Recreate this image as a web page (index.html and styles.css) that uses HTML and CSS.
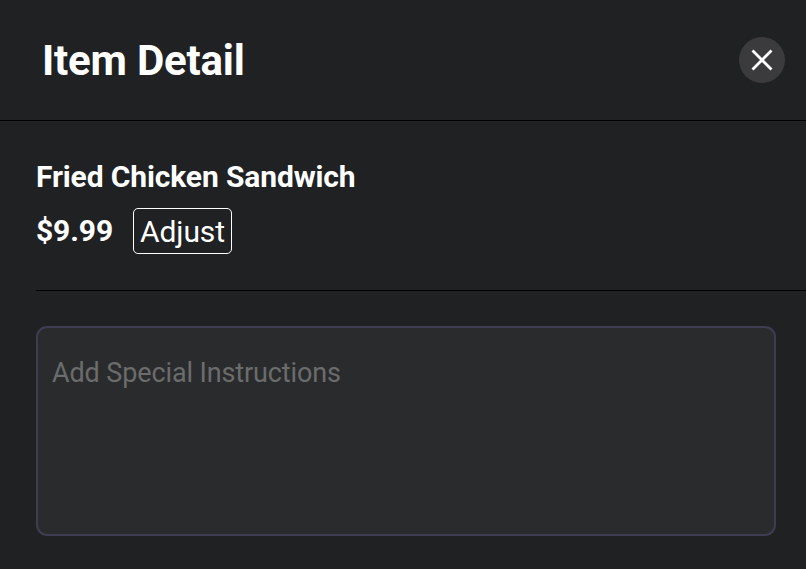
FILE: index.html
```html
<!DOCTYPE html>
<html lang="en">
<head>
    <meta charset="UTF-8">
    <meta name="viewport" content="width=device-width, initial-scale=1.0">
    <title>Item Detail</title>
    <link rel="stylesheet" href="styles.css">
</head>
<body>
    <div class="item-detail">
        <div class="header">
            <h1>Item Detail</h1>
            <button class="close-btn" type="button" aria-label="Close">
                <svg width="22" height="22" viewBox="0 0 22 22" fill="none" stroke="#fff" stroke-width="2.8">
                    <path d="M1.5 1.5L20.5 20.5M20.5 1.5L1.5 20.5"/>
                </svg>
            </button>
        </div>

        <div class="item-info">
            <h2 class="item-name">Fried Chicken Sandwich</h2>
            <div class="price-row">
                <span class="price">$9.99</span>
                <button class="adjust-btn" type="button">Adjust</button>
            </div>
        </div>

        <div class="instructions">
            <textarea class="instructions-input" placeholder="Add Special Instructions"></textarea>
        </div>
    </div>
</body>
</html>
```
FILE: styles.css
```css
* {
    margin: 0;
    padding: 0;
    box-sizing: border-box;
}

body {
    font-family: Roboto, sans-serif;
    background: #202123;
    color: #fff;
    overflow: hidden;
}

.item-detail {
    height: 569px;
}

.header {
    display: flex;
    justify-content: space-between;
    align-items: center;
    height: 121px;
    padding: 0 21px 1px 42px;
    border-bottom: 1px solid #000;
}

.header h1 {
    padding-top: 3px;
    font-size: 42px;
    font-weight: 700;
    line-height: 50px;
    letter-spacing: -0.2px;
}

.close-btn {
    display: flex;
    align-items: center;
    justify-content: center;
    width: 46px;
    height: 46px;
    border: none;
    border-radius: 50%;
    background: #3b3b3d;
    cursor: pointer;
}

.item-info {
    height: 170px;
    margin-left: 36px;
    padding-top: 38px;
    border-bottom: 1px solid #000;
}

.item-name {
    font-size: 30px;
    font-weight: 700;
    line-height: 36px;
    letter-spacing: -0.13px;
}

.price-row {
    display: flex;
    align-items: center;
    margin-top: 13px;
}

.price {
    width: 97px;
    padding-bottom: 1px;
    font-size: 30px;
    font-weight: 700;
    letter-spacing: -0.1px;
}

.adjust-btn {
    width: 99px;
    height: 46px;
    border: 1px solid #fff;
    border-radius: 5px;
    background: transparent;
    color: #fff;
    font-family: inherit;
    font-size: 30px;
    letter-spacing: -0.1px;
    cursor: pointer;
}

.instructions {
    padding: 35px 30px 0 36px;
}

.instructions-input {
    display: block;
    width: 100%;
    height: 210px;
    padding: 28px 14px;
    border: 2px solid #3f3d52;
    border-radius: 11px;
    background: #2a2b2c;
    color: #fff;
    font-family: inherit;
    font-size: 27px;
    line-height: 34px;
    letter-spacing: -0.12px;
    resize: none;
    outline: none;
}

.instructions-input::placeholder {
    color: #6b6c6c;
}
```
